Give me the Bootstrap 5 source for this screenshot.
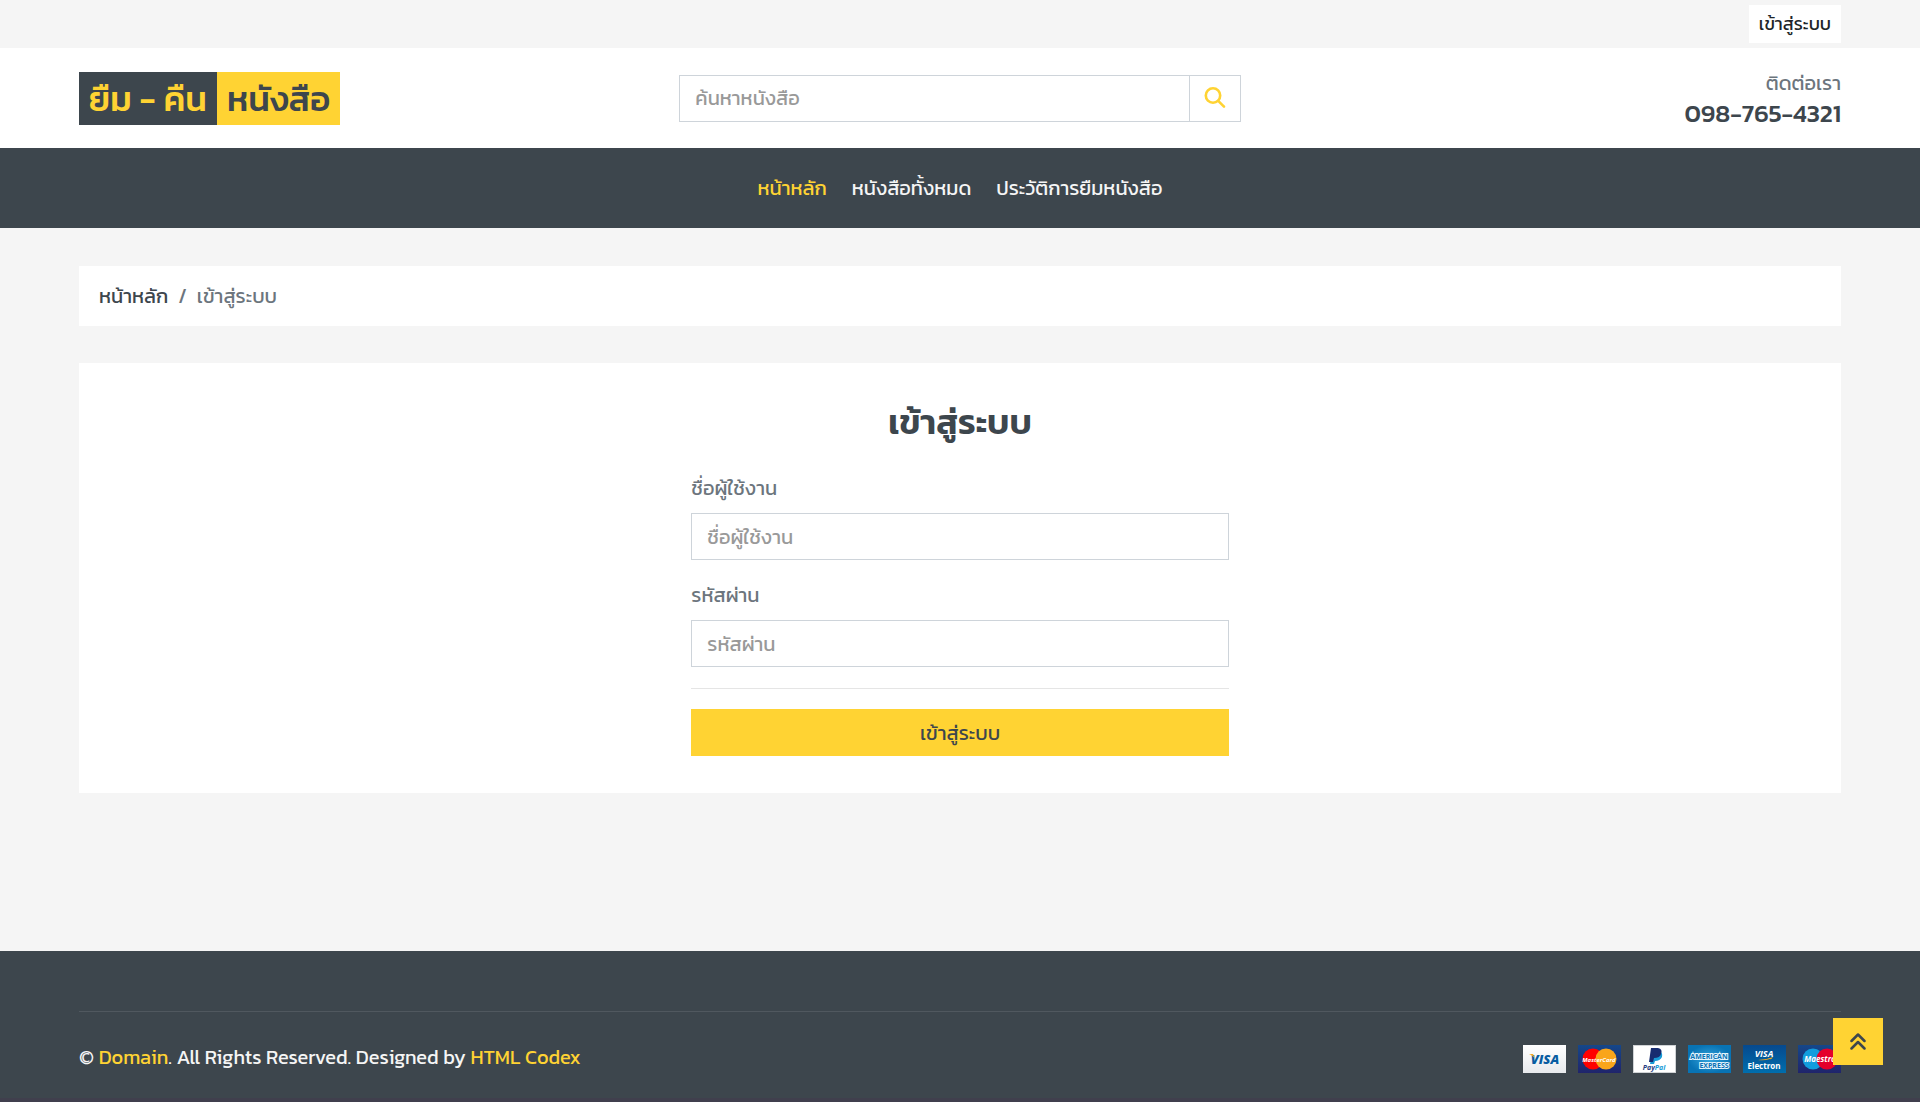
<!DOCTYPE html>
<html lang="th">
<head>
<meta charset="utf-8">
<meta name="viewport" content="width=device-width, initial-scale=1">
<title>เข้าสู่ระบบ</title>
<link href="https://cdn.jsdelivr.net/npm/bootstrap@5.3.0/dist/css/bootstrap.min.css" rel="stylesheet">
<style>
:root{--brand:#ffd333;--ink:#3d464d;--soft:#f5f5f5;--muted:#6c757d;--line:#ced4da}
body{font-family:Kanit,"Noto Sans",sans-serif;font-size:20px;line-height:30px;font-weight:400;background:var(--soft);color:var(--muted)}
.site-x{padding-left:79px;padding-right:79px}
.bg-ink{background:var(--ink)}
.top-strip{padding-top:5px;padding-bottom:5px}
.login-link{font-size:18px;line-height:26px;padding:5px 9px;border:1px solid #fff;border-radius:0;background:#fff;color:#212529}
.site-head{min-height:100px}
.site-head,.login-row{--bs-gutter-x:26px}
.brand{font-size:35px;line-height:53px;font-weight:500;text-decoration:none}
.brand span{display:block;padding:0 10px}
.brand-a{background:var(--ink);color:var(--brand)}
.brand-b{background:var(--brand);color:var(--ink)}
.form-control{font-size:20px;line-height:30px;height:47px;padding:7px 15px;border-radius:0;border-color:var(--line)}
.form-control::placeholder{color:#999}
.search-btn{width:52px;border:1px solid var(--line);border-radius:0;background:#fff;color:var(--brand);padding:0}
.phone{font-size:25px;line-height:30px;font-weight:500;color:var(--ink)}
.main-nav{min-height:80px;column-gap:25px}
.main-nav a{color:var(--soft);padding:0}
.main-nav a.active{color:var(--brand)}
main{padding-top:38px;padding-bottom:158px}
.crumbs{--bs-breadcrumb-divider-color:var(--muted);--bs-breadcrumb-item-padding-x:10px;padding:15px 20px;margin-bottom:37px;font-size:20px}
.crumbs a{color:var(--ink);text-decoration:none}
.crumbs .active{color:var(--muted)}
.panel{padding:38px 0 37px}
.panel h1{font-size:35px;line-height:42px;font-weight:600;color:var(--ink);margin-bottom:30px}
.form-label{margin-bottom:10px}
.field{margin-bottom:20px}
.panel hr{margin:21px 0 20px;color:#000;opacity:.1}
.submit{height:47px;border-radius:0;font-size:20px;line-height:30px;background:var(--brand);color:var(--ink)}
.site-foot{padding-top:60px;border-bottom:4px solid #403f4d;color:var(--soft)}
.site-foot a{color:var(--brand);text-decoration:none}
.foot-row{border-top:1px solid #50585f;padding:30px 0 25px}
.pay{display:block;flex:none;width:318px;margin-top:3px}
.to-top{position:fixed;right:37px;bottom:37px;width:50px;height:47px;background:var(--brand);color:var(--ink);border-radius:0;padding:0}
</style>
</head>
<body>
<div class="site-x top-strip d-flex justify-content-end"><a class="btn login-link" href="#">เข้าสู่ระบบ</a></div>
<header class="site-x bg-white">
  <div class="row mx-0 align-items-center site-head">
    <div class="col-4 px-0 d-flex"><a class="brand d-flex" href="#"><span class="brand-a">ยืม - คืน</span><span class="brand-b">หนังสือ</span></a></div>
    <div class="col-4">
      <form class="d-flex" role="search">
        <input class="form-control border-end-0" type="search" placeholder="ค้นหาหนังสือ" aria-label="ค้นหาหนังสือ">
        <button class="btn search-btn flex-shrink-0" type="button" aria-label="ค้นหา"><svg class="d-block mx-auto" width="22" height="24" viewBox="0 0 22 24" fill="none" stroke="currentColor" stroke-width="2.6" stroke-linecap="round"><circle cx="9" cy="9.5" r="7.2"/><path d="M14.2 14.8 20 20.6"/></svg></button>
      </form>
    </div>
    <div class="col-4 px-0 text-end"><div>ติดต่อเรา</div><div class="phone">098-765-4321</div></div>
  </div>
</header>
<nav class="site-x bg-ink main-nav nav justify-content-center align-items-center">
  <a class="nav-link active" href="#">หน้าหลัก</a><a class="nav-link" href="#">หนังสือทั้งหมด</a><a class="nav-link" href="#">ประวัติการยืมหนังสือ</a>
</nav>
<main class="site-x">
  <ol class="breadcrumb crumbs bg-white"><li class="breadcrumb-item"><a href="#">หน้าหลัก</a></li><li class="breadcrumb-item active">เข้าสู่ระบบ</li></ol>
  <section class="panel bg-white">
    <div class="row mx-0 justify-content-center login-row"><div class="col-4"><form class="px-2 mx-1">
      <h1 class="text-center">เข้าสู่ระบบ</h1>
      <div class="field"><label class="form-label d-block" for="user">ชื่อผู้ใช้งาน</label><input class="form-control" id="user" type="text" placeholder="ชื่อผู้ใช้งาน"></div>
      <div class="field"><label class="form-label d-block" for="pass">รหัสผ่าน</label><input class="form-control" id="pass" type="password" placeholder="รหัสผ่าน"></div>
      <hr>
      <button class="btn submit w-100" type="button">เข้าสู่ระบบ</button>
    </form></div></div>
  </section>
</main>
<footer class="site-x bg-ink site-foot">
  <div class="foot-row d-flex justify-content-between align-items-start">
    <div>© <a href="#">Domain</a>. All Rights Reserved. Designed by <a href="#">HTML Codex</a></div>
    <svg class="pay" height="28" viewBox="0 0 318 28" role="img" aria-label="Payment methods" font-family="Open Sans, sans-serif" font-weight="700" text-anchor="middle">
      <defs>
        <linearGradient id="pale" x2="0" y2="1"><stop stop-color="#fff"/><stop offset="1" stop-color="#e8eaed"/></linearGradient>
        <linearGradient id="navy" x2="0" y2="1"><stop stop-color="#15478a"/><stop offset="1" stop-color="#20246b"/></linearGradient>
        <linearGradient id="sea" x2="0" y2="1"><stop stop-color="#06498e"/><stop offset="1" stop-color="#006ead"/></linearGradient>
        <radialGradient id="amex"><stop stop-color="#36a7df"/><stop offset="1" stop-color="#0873b4"/></radialGradient>
      </defs>
      <g><rect width="43" height="28" fill="url(#pale)"/><text x="22" y="19" font-size="13" font-weight="800" font-style="italic" fill="#075ca2">VISA</text><path d="M6 9h4l2 5c-1-2-3-4-6-5" fill="#f5ac20"/></g>
      <g transform="translate(55)"><rect width="43" height="28" fill="url(#navy)"/><circle cx="15" cy="14" r="10.5" fill="#f00"/><circle cx="28" cy="14" r="10.5" fill="#f9a51b"/><text x="21" y="17" font-size="6" font-style="italic" fill="#fff">MasterCard</text></g>
      <g transform="translate(110)"><rect x=".5" y=".5" width="42" height="27" fill="#fff" stroke="#d0d3d6"/><path d="M20 6h6q4 1 3 6-2 4-7 4l-1 3h-4z" fill="#179bd7"/><path d="M18 3h7q5 1 3 6-1 4-7 4l-1 4h-4z" fill="#172c70"/><text x="21" y="25" font-size="7" font-style="italic" fill="#253b80">Pay<tspan fill="#179bd7">Pal</tspan></text></g>
      <g transform="translate(165)"><rect width="43" height="28" fill="url(#amex)"/><g fill="#0872b5" stroke="#e4f4fc" stroke-width="2" paint-order="stroke"><text x="21" y="14" font-size="7">AMERICAN</text><text x="26" y="23" font-size="7">EXPRESS</text></g></g>
      <g transform="translate(220)"><rect width="43" height="28" fill="url(#sea)"/><text x="21" y="12" font-size="9" font-style="italic" fill="#fff">VISA</text><path d="M15 15q8 0 15-3-2 3-3 2-6 2-12 1" fill="#f2a51e"/><text x="21" y="24" font-size="8" fill="#fff">Electron</text></g>
      <g transform="translate(275)"><rect width="43" height="28" fill="url(#navy)"/><circle cx="15" cy="14" r="10.5" fill="#129ddd"/><circle cx="29" cy="14" r="10.5" fill="#e4002b"/><text x="22" y="17" font-size="8" font-style="italic" fill="#fff">Maestro</text></g>
    </svg>
  </div>
</footer>
<button class="btn to-top" type="button" aria-label="กลับขึ้นด้านบน"><svg class="d-block mx-auto" width="18" height="18" viewBox="0 0 18 18" fill="none" stroke="currentColor" stroke-width="2.5" stroke-linecap="round" stroke-linejoin="round"><path d="M2.5 8 9 1.500 15.500 8M2.500 15.500 9 9l6.500 6.500"/></svg></button>
<script src="https://cdn.jsdelivr.net/npm/bootstrap@5.3.0/dist/js/bootstrap.bundle.min.js"></script>
</body>
</html>
